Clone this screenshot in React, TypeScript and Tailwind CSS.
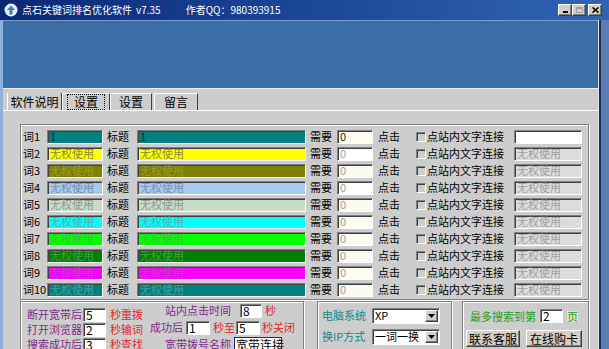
import React from 'react';

const sunken = 'border border-t-[#808080] border-l-[#808080] border-b-white border-r-white';
const raised =
  'border border-t-white border-l-white border-b-[#404040] border-r-[#404040] shadow-[inset_-1px_-1px_0_#808080]';

const rows = [
  { n: '1', field: 'bg-[#008080] text-[#0b2f2f]', text: '1', need: 'bg-[#fdfaf0] text-[#202020]', right: 'bg-white', rightText: '' },
  { n: '2', field: 'bg-[#ffff00] text-[#8a8a3a]', text: '无权使用', need: 'bg-white text-[#a0a0a0]', right: 'bg-[#dcdcdc]', rightText: '无权使用' },
  { n: '3', field: 'bg-[#808000] text-[#9a9a30]', text: '无权使用', need: 'bg-[#fdfaf0] text-[#a0a0a0]', right: 'bg-[#dcdcdc]', rightText: '无权使用' },
  { n: '4', field: 'bg-[#a6caf0] text-[#7890b0]', text: '无权使用', need: 'bg-white text-[#a0a0a0]', right: 'bg-[#dcdcdc]', rightText: '无权使用' },
  { n: '5', field: 'bg-[#c8dcc8] text-[#909890]', text: '无权使用', need: 'bg-[#fdfaf0] text-[#a0a0a0]', right: 'bg-[#dcdcdc]', rightText: '无权使用' },
  { n: '6', field: 'bg-[#00ffff] text-[#50b0b0]', text: '无权使用', need: 'bg-[#fdfaf0] text-[#a0a0a0]', right: 'bg-[#dcdcdc]', rightText: '无权使用' },
  { n: '7', field: 'bg-[#00ff00] text-[#40c040]', text: '无权使用', need: 'bg-[#fdfaf0] text-[#a0a0a0]', right: 'bg-[#dcdcdc]', rightText: '无权使用' },
  { n: '8', field: 'bg-[#008000] text-[#40a040]', text: '无权使用', need: 'bg-[#fdfaf0] text-[#a0a0a0]', right: 'bg-[#dcdcdc]', rightText: '无权使用' },
  { n: '9', field: 'bg-[#ff00ff] text-[#c040c0]', text: '无权使用', need: 'bg-[#fdfaf0] text-[#a0a0a0]', right: 'bg-[#dcdcdc]', rightText: '无权使用' },
  { n: '10', field: 'bg-[#008080] text-[#40a0a0]', text: '无权使用', need: 'bg-[#fdfaf0] text-[#a0a0a0]', right: 'bg-[#dcdcdc]', rightText: '无权使用' },
];

function TitleBar() {
  return (
    <div className="h-[20px] flex items-center bg-gradient-to-r from-[#0b2874] via-[#1c4698] to-[#3264b4] text-white shrink-0">
      <svg className="ml-[4px] w-[14px] h-[14px]" viewBox="0 0 14 14">
        <circle cx="7" cy="7" r="6.5" fill="#e8f0fc" />
        <path d="M7 2.5 L11 7 L8.5 7 L8.5 11.5 L5.5 11.5 L5.5 7 L3 7 Z" fill="#3a78c8" />
      </svg>
      <span className="ml-[4px] text-[10px] leading-none">点石关键词排名优化软件</span>
      <span className="ml-[4px] text-[10px] leading-none">v7.35</span>
      <span className="ml-[25px] text-[10px] leading-none">作者QQ：980393915</span>
      <div className="ml-auto mr-[7px] flex items-center">
        <div className={`${raised} w-[14px] h-[12px] bg-[#d4d0c8] flex items-end justify-center pb-[2px]`}>
          <div className="w-[5px] h-[2px] bg-black" />
        </div>
        <div className={`${raised} w-[14px] h-[12px] bg-[#d4d0c8] flex items-center justify-center`}>
          <div className="w-[7px] h-[6px] border border-[#a0a0a0] border-t-2" />
        </div>
        <div className={`${raised} ml-[2px] w-[14px] h-[12px] bg-[#d4d0c8] flex items-center justify-center`}>
          <svg className="w-[7px] h-[6px]" viewBox="0 0 7 6">
            <path d="M0.5 0.5 L6.5 5.5 M6.5 0.5 L0.5 5.5" stroke="black" strokeWidth="1.6" />
          </svg>
        </div>
      </div>
    </div>
  );
}

function WordRow({ r }: { r: (typeof rows)[number] }) {
  return (
    <div className="h-[17px] flex items-center text-[11px] leading-none text-black whitespace-nowrap">
      <span className="w-[24px]">词{r.n}</span>
      <div className={`${sunken} ${r.field} w-[56px] h-[14px] pl-[2px] flex items-center shadow-[inset_1px_1px_0_#404040]`}>
        {r.text}
      </div>
      <span className="ml-[4px] w-[30px]">标题</span>
      <div className={`${sunken} ${r.field} w-[169px] h-[14px] pl-[2px] flex items-center shadow-[inset_1px_1px_0_#404040]`}>
        {r.text}
      </div>
      <span className="ml-[4px] w-[26px]">需要</span>
      <div className={`${sunken} ${r.need} ml-[1px] w-[36px] h-[14px] pl-[2px] flex items-center shadow-[inset_1px_1px_0_#404040]`}>
        0
      </div>
      <span className="ml-[5px] w-[22px]">点击</span>
      <div className={`${sunken} ml-[16px] w-[10px] h-[10px] shadow-[inset_1px_1px_0_#404040]`} />
      <span className="ml-[1px] w-[80px]">点站内文字连接</span>
      <div className={`${sunken} ${r.right} ml-[7px] w-[68px] h-[14px] pl-[2px] flex items-center text-[#a0a0a0] shadow-[inset_1px_1px_0_#404040]`}>
        {r.rightText}
      </div>
    </div>
  );
}

function SmallInput({ w, children }: { w: string; children?: React.ReactNode }) {
  return (
    <div className={`${sunken} ${w} h-[14px] bg-white pl-[2px] flex items-center text-[12px] leading-none text-black shadow-[inset_1px_1px_0_#404040]`}>
      {children}
    </div>
  );
}

function Select({ value }: { value: string }) {
  return (
    <div className={`${sunken} ml-[6px] w-[68px] h-[16px] bg-white flex items-center shadow-[inset_1px_1px_0_#404040]`}>
      <span className="pl-[2px] flex-1 text-[11px] text-black">{value}</span>
      <div className={`${raised} w-[13px] h-[12px] mr-[1px] bg-[#d4d0c8] flex items-center justify-center`}>
        <svg className="w-[7px] h-[4px]" viewBox="0 0 7 4">
          <path d="M0 0 L7 0 L3.5 4 Z" fill="black" />
        </svg>
      </div>
    </div>
  );
}

export default function App() {
  return (
    <div className="w-[609px] h-[349px] overflow-hidden flex flex-col bg-[#3a6ea5] font-['Noto_Sans_CJK_SC',sans-serif]">
      <TitleBar />
      <div className="flex flex-1 min-h-0">
        <div className="w-[3px] bg-[#8fb2dc] shrink-0" />
        <div className="flex-1 flex flex-col min-w-0">
          <div className="h-[68px] bg-[#3b6ea6] border-t border-[#7a9ccc] shrink-0" />
          <div className="flex-1 bg-[#cdcdcd] border-t border-[#ececec] pt-[4px]">
            {/* tabs */}
            <div className="flex h-[17px] pl-[4px] text-[12px] leading-none text-black">
              <div className="w-[55px] flex items-center justify-center border-l border-r border-l-white border-r-[#404040]">
                软件说明
              </div>
              <div className="w-[48px] flex items-center justify-center border-t border-l border-r border-t-white border-l-white border-r-[#404040]">
                <span className="px-[6px] py-[1px] border border-dotted border-black">设置</span>
              </div>
              <div className="w-[42px] flex items-center justify-center border-t border-l border-r border-t-white border-l-white border-r-[#404040]">
                设置
              </div>
              <div className="ml-[2px] w-[44px] flex items-center justify-center border-t border-l border-r border-t-white border-l-white border-r-[#404040]">
                留言
              </div>
            </div>
            <div className="border-t border-white">
              {/* keyword group */}
              <div className="ml-[17px] mt-[13px] w-[569px] border border-[#808080] shadow-[inset_1px_1px_0_#fff,1px_1px_0_#fff] pt-[3px] pb-[1px] pl-[2px]">
                {rows.map(r => (
                  <WordRow key={r.n} r={r} />
                ))}
              </div>
              {/* bottom groups */}
              <div className="flex mt-[1px] ml-[17px]">
                <div className="w-[284px] h-[60px] border border-[#808080] shadow-[inset_1px_1px_0_#fff,1px_1px_0_#fff] flex text-[11px] leading-none whitespace-nowrap">
                  <div className="pl-[6px] pt-[5px]">
                    {[
                      ['断开宽带后', '5', '秒重拨'],
                      ['打开浏览器', '2', '秒输词'],
                      ['搜索成功后', '3', '秒查找'],
                    ].map(([a, v, b]) => (
                      <div key={a} className="h-[15px] flex items-center">
                        <span className="w-[53px] text-[#802a8a]">{a}</span>
                        <div className="ml-[3px]">
                          <SmallInput w="w-[23px]">{v}</SmallInput>
                        </div>
                        <span className="ml-[4px] text-[#e02828]">{b}</span>
                      </div>
                    ))}
                  </div>
                  <div className="ml-[7px]">
                    <div className="h-[17px] flex items-center pl-[15px]">
                      <span className="w-[67px] text-[#802a8a]">站内点击时间</span>
                      <div className="ml-[8px]">
                        <SmallInput w="w-[22px]">8</SmallInput>
                      </div>
                      <span className="ml-[3px] text-[#e02828]">秒</span>
                    </div>
                    <div className="h-[17px] flex items-center">
                      <span className="w-[33px] text-[#802a8a]">成功后</span>
                      <div className="ml-[3px]">
                        <SmallInput w="w-[24px]">1</SmallInput>
                      </div>
                      <span className="ml-[3px] w-[22px] text-[#e02828]">秒至</span>
                      <div className="ml-[1px]">
                        <SmallInput w="w-[24px]">5</SmallInput>
                      </div>
                      <span className="ml-[2px] text-[#e02828]">秒关闭</span>
                    </div>
                    <div className="h-[17px] flex items-center pl-[15px]">
                      <span className="w-[67px] text-[#802a8a]">宽带拨号名称</span>
                      <div className="ml-[2px] w-[48px] h-[15px] bg-white border border-[#1a2a70] pl-[1px] flex items-center text-[12px] leading-none text-black">
                        宽带连接
                      </div>
                    </div>
                  </div>
                </div>

                <div className="ml-[13px] w-[135px] h-[60px] border border-[#808080] shadow-[inset_1px_1px_0_#fff,1px_1px_0_#fff] pt-[3px] pl-[4px] text-[11px] leading-none text-[#108a8a] whitespace-nowrap">
                  <div className="h-[21px] flex items-center">
                    <span className="w-[44px]">电脑系统</span>
                    <Select value="XP" />
                  </div>
                  <div className="h-[21px] flex items-center">
                    <span className="w-[44px]">换IP方式</span>
                    <Select value="一词一换" />
                  </div>
                </div>

                <div className="ml-[10px] w-[127px] h-[60px] border border-[#808080] shadow-[inset_1px_1px_0_#fff,1px_1px_0_#fff] pt-[5px] text-[11px] leading-none whitespace-nowrap">
                  <div className="h-[18px] flex items-center pl-[7px] text-[#22a022]">
                    <span className="w-[66px]">最多搜索到第</span>
                    <div className="ml-[4px]">
                      <SmallInput w="w-[23px]">2</SmallInput>
                    </div>
                    <span className="ml-[4px] bg-[#dfe6c4]">页</span>
                  </div>
                  <div className="mt-[5px] flex pl-[3px] text-[12px] text-black">
                    <div className={`${raised} w-[54px] h-[17px] bg-[#d4d0c8] flex items-center justify-center`}>联系客服</div>
                    <div className={`${raised} ml-[6px] w-[56px] h-[17px] bg-[#d4d0c8] flex items-center justify-center`}>在线购卡</div>
                  </div>
                </div>
              </div>
            </div>
          </div>
        </div>
        <div className="w-[1px] bg-[#e4e4e4] shrink-0" />
        <div className="w-[2px] bg-[#1c2c58] shrink-0" />
        <div className="w-[8px] bg-[#5a7cb4] shrink-0" />
      </div>
    </div>
  );
}
